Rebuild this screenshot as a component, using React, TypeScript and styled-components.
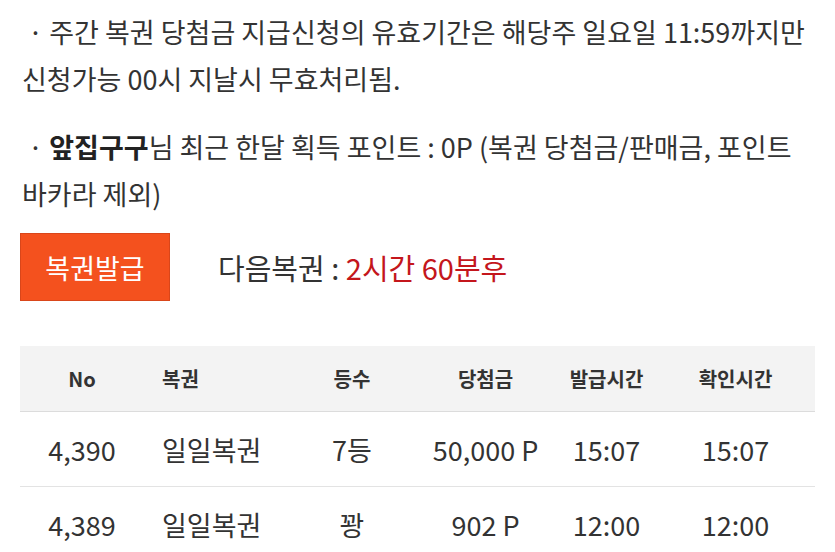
import React from "react";
import styled, { createGlobalStyle } from "styled-components";

const GlobalStyle = createGlobalStyle`
  html, body {
    margin: 0;
    padding: 0;
    background: #fff;
    overflow: hidden;
  }
  body {
    font-family: "Noto Sans CJK KR", "Noto Sans", sans-serif;
    color: #333;
  }
`;

const Page = styled.div`
  width: 835px;
  padding: 8px 0 0 22px;
  box-sizing: border-box;
`;

const Notice = styled.p`
  margin: 0 0 21px;
  font-size: 27px;
  line-height: 47px;
  color: #333;
  padding-right: 28px;
`;

const Nick = styled.b`
  font-weight: 700;
  color: #222;
`;

const IssueRow = styled.div`
  display: flex;
  align-items: center;
  gap: 48px;
  margin: -5px 0 0 -2px;
  height: 68px;
`;

const IssueButton = styled.button`
  width: 150px;
  height: 68px;
  background: #f4511e;
  border: 1px solid #d9461a;
  color: #fff;
  font-family: inherit;
  font-size: 27px;
  padding: 0;
  cursor: pointer;
`;

const NextInfo = styled.div`
  font-size: 29px;
  color: #333;
`;

const Countdown = styled.span`
  color: #c4161c;
`;

const Table = styled.div`
  margin: 45px 0 0 -2px;
  width: 795px;
`;

const Row = styled.div<{ $head?: boolean }>`
  display: grid;
  grid-template-columns: 124px 146px 124px 143px 99px 1fr;
  align-items: center;
  height: ${(p) => (p.$head ? 65 : 74)}px;
  background: ${(p) => (p.$head ? "#f3f3f3" : "#fff")};
  border-bottom: 1px solid ${(p) => (p.$head ? "#dcdcdc" : "#e3e3e3")};
  font-size: ${(p) => (p.$head ? 20 : 27)}px;
  font-weight: ${(p) => (p.$head ? 700 : 400)};
  color: #333;
`;

const Cell = styled.div<{ $left?: boolean }>`
  text-align: ${(p) => (p.$left ? "left" : "center")};
  padding-left: ${(p) => (p.$left ? 18 : 0)}px;
  white-space: nowrap;
`;

const rows = [
  { no: "4,390", name: "일일복권", rank: "7등", prize: "50,000 P", issued: "15:07", checked: "15:07" },
  { no: "4,389", name: "일일복권", rank: "꽝", prize: "902 P", issued: "12:00", checked: "12:00" },
];

export default function App() {
  return (
    <>
      <GlobalStyle />
      <Page>
        <Notice>
          &nbsp;· 주간 복권 당첨금 지급신청의 유효기간은 해당주 일요일 11:59까지만 신청가능 00시 지날시 무효처리됨.
        </Notice>
        <Notice>
          &nbsp;· <Nick>앞집구구</Nick>님 최근 한달 획득 포인트 : 0P (복권 당첨금/판매금, 포인트 바카라 제외)
        </Notice>
        <IssueRow>
          <IssueButton>복권발급</IssueButton>
          <NextInfo>
            다음복권 : <Countdown>2시간 60분후</Countdown>
          </NextInfo>
        </IssueRow>
        <Table>
          <Row $head>
            <Cell>No</Cell>
            <Cell $left>복권</Cell>
            <Cell>등수</Cell>
            <Cell>당첨금</Cell>
            <Cell>발급시간</Cell>
            <Cell>확인시간</Cell>
          </Row>
          {rows.map((r) => (
            <Row key={r.no}>
              <Cell>{r.no}</Cell>
              <Cell $left>{r.name}</Cell>
              <Cell>{r.rank}</Cell>
              <Cell>{r.prize}</Cell>
              <Cell>{r.issued}</Cell>
              <Cell>{r.checked}</Cell>
            </Row>
          ))}
        </Table>
      </Page>
    </>
  );
}
